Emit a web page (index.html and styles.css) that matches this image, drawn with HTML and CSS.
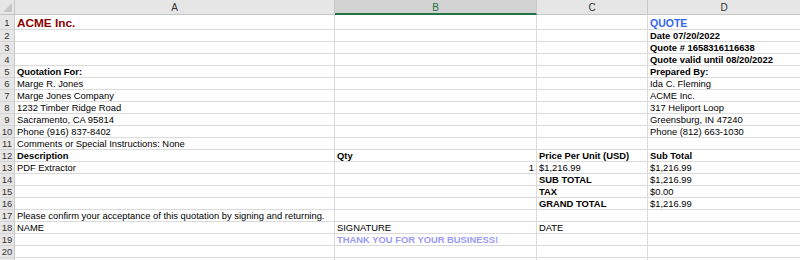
FILE: index.html
```html
<!DOCTYPE html>
<html>
<head>
<meta charset="utf-8">
<link rel="stylesheet" href="styles.css">
</head>
<body>
<div class="sheet">
  <div class="hd corner"><span class="tri"></span></div>
  <div class="hd col">A</div>
  <div class="hd col sel">B</div>
  <div class="hd col">C</div>
  <div class="hd col">D</div>

  <div class="rn r1">1</div><div class="c r1 company">ACME Inc.</div><div class="c r1"></div><div class="c r1"></div><div class="c r1 quote">QUOTE</div>
  <div class="rn">2</div><div class="c"></div><div class="c"></div><div class="c"></div><div class="c b">Date 07/20/2022</div>
  <div class="rn">3</div><div class="c"></div><div class="c"></div><div class="c"></div><div class="c b">Quote # 1658316116638</div>
  <div class="rn">4</div><div class="c"></div><div class="c"></div><div class="c"></div><div class="c b">Quote valid until 08/20/2022</div>
  <div class="rn">5</div><div class="c b">Quotation For:</div><div class="c"></div><div class="c"></div><div class="c b">Prepared By:</div>
  <div class="rn">6</div><div class="c">Marge R. Jones</div><div class="c"></div><div class="c"></div><div class="c">Ida C. Fleming</div>
  <div class="rn">7</div><div class="c">Marge Jones Company</div><div class="c"></div><div class="c"></div><div class="c">ACME Inc.</div>
  <div class="rn">8</div><div class="c">1232 Timber Ridge Road</div><div class="c"></div><div class="c"></div><div class="c">317 Heliport Loop</div>
  <div class="rn">9</div><div class="c">Sacramento, CA 95814</div><div class="c"></div><div class="c"></div><div class="c">Greensburg, IN 47240</div>
  <div class="rn">10</div><div class="c">Phone (916) 837-8402</div><div class="c"></div><div class="c"></div><div class="c">Phone (812) 663-1030</div>
  <div class="rn">11</div><div class="c">Comments or Special Instructions: None</div><div class="c"></div><div class="c"></div><div class="c"></div>
  <div class="rn">12</div><div class="c b">Description</div><div class="c b">Qty</div><div class="c b">Price Per Unit (USD)</div><div class="c b">Sub Total</div>
  <div class="rn">13</div><div class="c">PDF Extractor</div><div class="c num">1</div><div class="c">$1,216.99</div><div class="c">$1,216.99</div>
  <div class="rn">14</div><div class="c"></div><div class="c"></div><div class="c b">SUB TOTAL</div><div class="c">$1,216.99</div>
  <div class="rn">15</div><div class="c"></div><div class="c"></div><div class="c b">TAX</div><div class="c">$0.00</div>
  <div class="rn">16</div><div class="c"></div><div class="c"></div><div class="c b">GRAND TOTAL</div><div class="c">$1,216.99</div>
  <div class="rn">17</div><div class="c">Please confirm your acceptance of this quotation by signing and returning.</div><div class="c"></div><div class="c"></div><div class="c"></div>
  <div class="rn">18</div><div class="c">NAME</div><div class="c">SIGNATURE</div><div class="c">DATE</div><div class="c"></div>
  <div class="rn">19</div><div class="c"></div><div class="c thanks">THANK YOU FOR YOUR BUSINESS!</div><div class="c"></div><div class="c"></div>
  <div class="rn">20</div><div class="c"></div><div class="c"></div><div class="c"></div><div class="c"></div>
  <div class="rn"></div><div class="c"></div><div class="c"></div><div class="c"></div><div class="c"></div>
</div>
</body>
</html>
```
FILE: styles.css
```css
html, body {
  margin: 0;
  padding: 0;
  background: #ffffff;
  overflow: hidden;
}
.sheet {
  display: grid;
  grid-template-columns: 15px 320px 202px 111px 153px;
  grid-template-rows: 15px 15px repeat(20, 12px);
  font-family: "Liberation Sans", Arial, sans-serif;
  font-size: 9.4px;
  color: #000;
  width: 801px;
}
.hd {
  background: #e6e6e6;
  border-right: 1px solid #c8c8c8;
  border-bottom: 1px solid #c4c4c4;
  color: #333;
  font-size: 10px;
  line-height: 15px;
  text-align: center;
  box-sizing: border-box;
}
.corner {
  position: relative;
}
.tri {
  position: absolute;
  right: 2px;
  bottom: 2px;
  width: 0;
  height: 0;
  border-left: 9px solid transparent;
  border-bottom: 9px solid #c6c6c6;
}
.col.sel {
  background: #d2d2d2;
  color: #217346;
  border-bottom: 2px solid #217346;
}
.rn {
  background: #e6e6e6;
  border-right: 1px solid #c8c8c8;
  border-bottom: 1px solid #d4d4d4;
  box-sizing: border-box;
  color: #333;
  font-size: 9.5px;
  line-height: 12px;
  text-align: center;
}
.c {
  border-right: 1px solid #dadada;
  border-bottom: 1px solid #dadada;
  box-sizing: border-box;
  padding: 0 2px;
  line-height: 12px;
  white-space: nowrap;
  overflow: visible;
}
.r1 {
  line-height: 16px;
}
.b {
  font-weight: bold;
}
.num {
  text-align: right;
}
.company {
  color: #8b0000;
  font-weight: bold;
  font-size: 11.8px;
  line-height: 16px;
}
.quote {
  color: #3366ee;
  font-weight: bold;
  font-size: 10.5px;
  line-height: 16px;
}
.thanks {
  color: #9b9bf5;
  font-weight: bold;
}
```
